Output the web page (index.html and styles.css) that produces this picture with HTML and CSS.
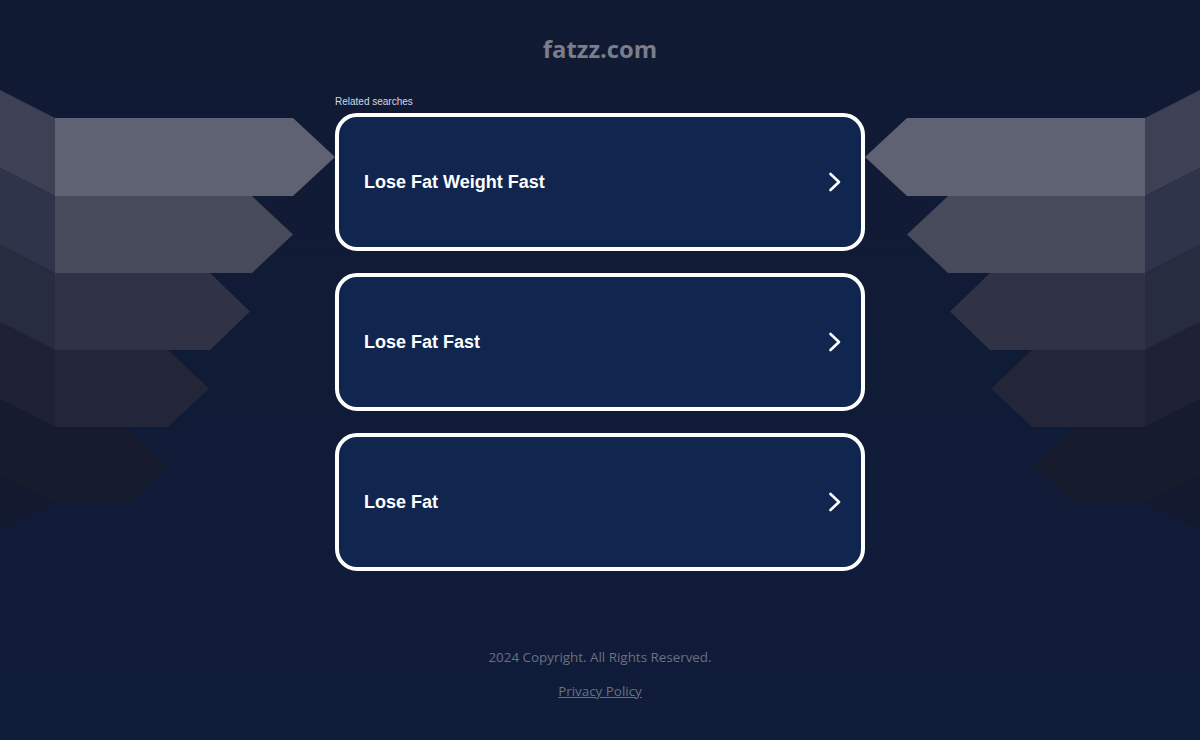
FILE: index.html
```html
<!DOCTYPE html>
<html lang="en">
<head>
<meta charset="utf-8">
<title>fatzz.com</title>
<link rel="stylesheet" href="styles.css">
</head>
<body>
<div class="page">
  <svg class="bg" width="1200" height="740" viewBox="0 0 1200 740" aria-hidden="true">
    <g>
      <polygon points="0,90 55,118 55,196 0,168" fill="#3d4153"/>
      <polygon points="0,168 55,196 55,273 0,245" fill="#30344a"/>
      <polygon points="0,245 55,273 55,350 0,322" fill="#282c3f"/>
      <polygon points="0,322 55,350 55,427 0,399" fill="#1e2234"/>
      <polygon points="0,399 55,427 55,504 0,476" fill="#161b2e"/>
      <polygon points="0,476 55,504 0,530" fill="#131a30"/>
      <polygon points="55,118 293,118 335,157 293,196 55,196" fill="#5f6272"/>
      <polygon points="55,196 252,196 293,234.5 252,273 55,273" fill="#464a5a"/>
      <polygon points="55,273 210,273 250,311.5 210,350 55,350" fill="#2f3345"/>
      <polygon points="55,350 168,350 209,388.5 168,427 55,427" fill="#222638"/>
      <polygon points="55,427 127,427 167,465.5 127,504 55,504" fill="#161a2d"/>
    </g>
    <g transform="translate(1200,0) scale(-1,1)">
      <polygon points="0,90 55,118 55,196 0,168" fill="#3d4153"/>
      <polygon points="0,168 55,196 55,273 0,245" fill="#30344a"/>
      <polygon points="0,245 55,273 55,350 0,322" fill="#282c3f"/>
      <polygon points="0,322 55,350 55,427 0,399" fill="#1e2234"/>
      <polygon points="0,399 55,427 55,504 0,476" fill="#161b2e"/>
      <polygon points="0,476 55,504 0,530" fill="#131a30"/>
      <polygon points="55,118 293,118 335,157 293,196 55,196" fill="#5f6272"/>
      <polygon points="55,196 252,196 293,234.5 252,273 55,273" fill="#464a5a"/>
      <polygon points="55,273 210,273 250,311.5 210,350 55,350" fill="#2f3345"/>
      <polygon points="55,350 168,350 209,388.5 168,427 55,427" fill="#222638"/>
      <polygon points="55,427 127,427 167,465.5 127,504 55,504" fill="#161a2d"/>
    </g>
  </svg>
  <main class="content">
    <h1 class="domain">fatzz.com</h1>
    <section class="related">
      <div class="related-label">Related searches</div>
      <a class="card" href="#"><span class="card-text">Lose Fat Weight Fast</span><svg class="chev" width="14" height="20" viewBox="0 0 14 20"><path d="M2.5 2 L11 10 L2.5 18" fill="none" stroke="#fff" stroke-width="2.6" stroke-linecap="round" stroke-linejoin="round"/></svg></a>
      <a class="card" href="#"><span class="card-text">Lose Fat Fast</span><svg class="chev" width="14" height="20" viewBox="0 0 14 20"><path d="M2.5 2 L11 10 L2.5 18" fill="none" stroke="#fff" stroke-width="2.6" stroke-linecap="round" stroke-linejoin="round"/></svg></a>
      <a class="card" href="#"><span class="card-text">Lose Fat</span><svg class="chev" width="14" height="20" viewBox="0 0 14 20"><path d="M2.5 2 L11 10 L2.5 18" fill="none" stroke="#fff" stroke-width="2.6" stroke-linecap="round" stroke-linejoin="round"/></svg></a>
    </section>
    <footer class="footer">
      <div class="copy">2024 Copyright. All Rights Reserved.</div>
      <a class="privacy" href="#">Privacy Policy</a>
    </footer>
  </main>
</div>
</body>
</html>
```
FILE: styles.css
```css
html, body {
  margin: 0;
  padding: 0;
  background: #0f1b36;
}
.page {
  position: relative;
  width: 1200px;
  height: 740px;
  overflow: hidden;
  background: linear-gradient(#111a33, #0f1c3a);
}
.bg {
  position: absolute;
  left: 0;
  top: 0;
}
.content {
  position: relative;
  z-index: 1;
  display: flex;
  flex-direction: column;
  align-items: center;
}
.domain {
  margin: 33px 0 0;
  font-family: "Open Sans", sans-serif;
  font-weight: 700;
  font-size: 23.8px;
  line-height: 32px;
  color: #7a7e8a;
}
.related {
  width: 530px;
  margin-top: 31px;
  display: flex;
  flex-direction: column;
}
.related-label {
  font-family: "Liberation Sans", Arial, sans-serif;
  font-size: 10px;
  line-height: 12px;
  color: #d5d8e0;
  margin-bottom: 5px;
}
.card {
  box-sizing: border-box;
  height: 138px;
  border: 4px solid #ffffff;
  border-radius: 22px;
  background: #11264f;
  display: flex;
  align-items: center;
  justify-content: space-between;
  padding: 0 19px 0 25px;
  text-decoration: none;
  margin-bottom: 22px;
}
.card:last-child {
  margin-bottom: 0;
}
.card-text {
  font-family: "Liberation Sans", Arial, sans-serif;
  font-weight: 700;
  font-size: 18px;
  color: #ffffff;
}
.chev {
  display: block;
}
.footer {
  margin-top: 77px;
  display: flex;
  flex-direction: column;
  align-items: center;
  font-family: "Open Sans", sans-serif;
  font-size: 13.4px;
  line-height: 18px;
  color: #6b7081;
}
.privacy {
  margin-top: 16px;
  color: #6b7081;
  text-decoration: underline;
}
```
